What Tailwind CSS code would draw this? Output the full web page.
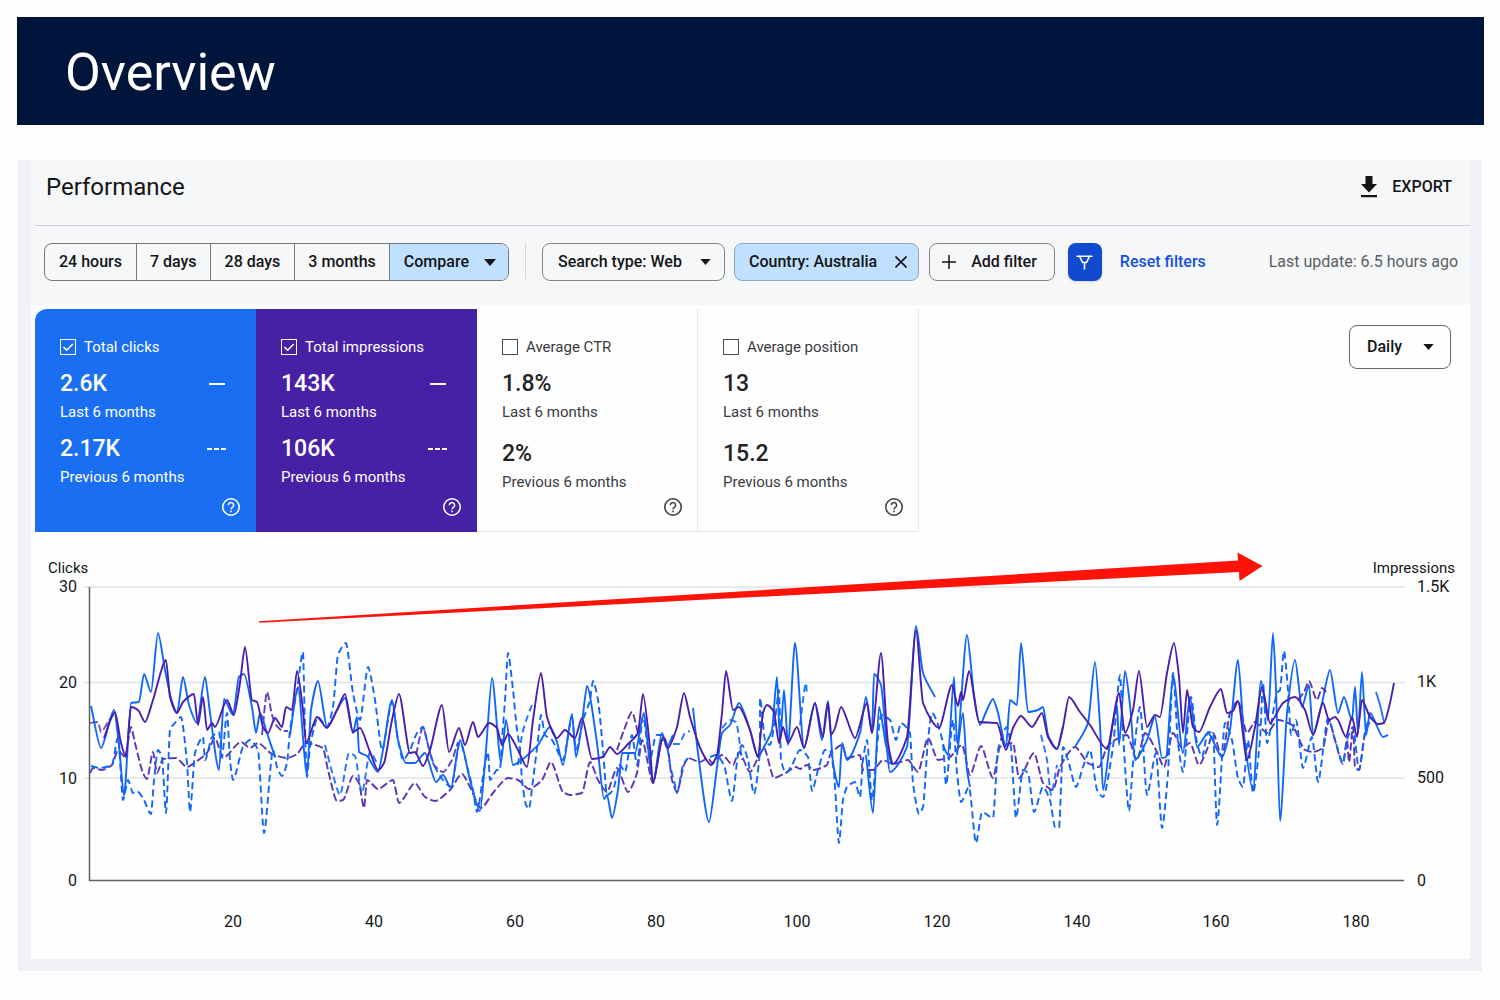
<!DOCTYPE html>
<html lang="en">
<head>
<meta charset="utf-8">
<meta name="viewport" content="width=device-width, initial-scale=1">
<title>Overview</title>
<script src="https://cdn.jsdelivr.net/npm/@tailwindcss/browser@4"></script>
</head>
<body class="bg-[#fdfdfd] font-[Roboto,sans-serif] text-base text-[#141517]">
<header class="mr-4 ml-[17px] mt-[17px] flex h-[108px] items-center bg-[#00153b] px-12 pt-1">
  <h1 class="text-[52px] leading-none text-white">Overview</h1>
</header>

<main class="mx-[18px] mt-[35px] mb-7 bg-[#f0f2f8] pr-3 pb-3 pl-[13px]">
  <div class="bg-[#f6f7f9]">
    <div class="ml-1 flex h-[66px] items-center justify-between border-b border-[#cdd2de] pr-[18px] pb-3 pl-[11px]">
      <h2 class="text-2xl leading-8">Performance</h2>
      <button class="flex items-center gap-[15px] font-medium">
        <svg class="h-[22px] w-4" viewBox="0 0 16 22" fill="currentColor" aria-hidden="true"><path d="M4.500 0h7v8H16l-8 8.500L0 8h4.500zM0 19h16v2.200H0z"/></svg>
        EXPORT
      </button>
    </div>

    <div class="flex h-[79px] items-start pt-[17px] pr-3 pl-[13px] whitespace-nowrap">
      <div class="flex h-[38px] overflow-hidden rounded-lg border border-[#77797d] font-medium" role="group" aria-label="Date range">
        <button class="border-r border-[#77797d] px-[14px]">24 hours</button>
        <button class="border-r border-[#77797d] px-[13px]">7 days</button>
        <button class="border-r border-[#77797d] px-[14px]">28 days</button>
        <button class="border-r border-[#77797d] px-[13px]">3 months</button>
        <button class="flex items-center gap-[15px] bg-[#bfe0fe] pr-3 pl-[14px]">Compare
          <svg class="h-[7px] w-3" viewBox="0 0 12 7" fill="currentColor" aria-hidden="true"><path d="M0 0h12L6 7z"/></svg>
        </button>
      </div>
      <div class="mx-4 h-9 w-px bg-[#d0d5df]"></div>
      <div class="relative h-[38px]">
        <select aria-label="Search type" class="h-full appearance-none rounded-lg border border-[#85878b] pr-[42px] pl-[15px] font-medium">
          <option>Search type: Web</option>
        </select>
        <svg class="pointer-events-none absolute top-4 right-[14px] h-[6px] w-[11px]" viewBox="0 0 12 7" fill="currentColor" aria-hidden="true"><path d="M0 0h12L6 7z"/></svg>
      </div>
      <div class="ml-[9px] flex h-[38px] items-center gap-[18px] rounded-lg border border-[#8fa8bf] bg-[#bfe0fe] pr-[11px] pl-[14px] font-medium">Country: Australia
        <button aria-label="Remove country filter"><svg class="size-3" viewBox="0 0 12 12" fill="none" stroke="currentColor" stroke-width="1.600" aria-hidden="true"><path d="M0.500 0.500l11 11M11.500 0.500l-11 11"/></svg></button>
      </div>
      <button class="ml-[10px] flex h-[38px] items-center gap-[15px] rounded-lg border border-[#85878b] pr-[17px] pl-3 font-medium">
        <svg class="size-[14px]" viewBox="0 0 14 14" fill="none" stroke="currentColor" stroke-width="1.500" aria-hidden="true"><path d="M7 0v14M0 7h14"/></svg>
        Add filter
      </button>
      <button class="ml-[13px] flex h-[38px] w-[34px] items-center justify-center rounded-lg bg-[#1149cf] text-white shadow-sm" aria-label="Filters">
        <svg class="h-[15px] w-[17px]" viewBox="0 0 17 15" fill="none" stroke="currentColor" stroke-width="1.600" stroke-linecap="round" stroke-linejoin="round" aria-hidden="true"><path d="M1 1.200h15M3.500 1.200l3 6.300h4l3-6.300M8.500 7.500V14"/></svg>
      </button>
      <a href="#" class="ml-[18px] leading-[38px] font-medium text-[#1450e0]">Reset filters</a>
      <p class="ml-auto leading-[38px] text-[#5c5e62]">Last update: 6.5 hours ago</p>
    </div>

    <section class="bg-[#fefefe] pt-1">
      <div class="flex items-start justify-between pr-[19px] pl-1">
        <div class="grid h-[223px] grid-cols-[repeat(4,221px)] text-[15px]">
          <article class="flex flex-col rounded-tl-xl bg-[#1a6ef2] pt-[26px] pr-4 pb-4 pl-[25px] text-white">
            <label class="flex items-center gap-2 leading-6">
              <span class="relative flex"><input type="checkbox" checked class="size-4 appearance-none border-[1.500px] border-white"><svg class="pointer-events-none absolute inset-0 size-4" viewBox="0 0 16 16" fill="none" stroke="currentColor" stroke-width="1.600" aria-hidden="true"><path d="M3.500 8l3.200 3.200L12.800 5"/></svg></span>
              Total clicks</label>
            <div class="mt-[9px] flex items-center justify-between pr-[15px]"><strong class="text-[23px] leading-8 font-medium">2.6K</strong><span class="w-4 border-t-2 border-white"></span></div>
            <p class="mt-0.5 leading-5">Last 6 months</p>
            <div class="mt-[11px] flex items-center justify-between pr-[14px]"><strong class="text-[23px] leading-8 font-medium">2.17K</strong><span class="flex gap-[2px]"><i class="h-0.5 w-[5px] bg-white"></i><i class="h-0.5 w-[5px] bg-white"></i><i class="h-0.5 w-[5px] bg-white"></i></span></div>
            <p class="mt-0.5 leading-5">Previous 6 months</p>
            <button class="mt-auto self-end" aria-label="About total clicks"><svg class="size-[18px]" viewBox="0 0 18 18" fill="none" stroke="currentColor" stroke-width="1.500" aria-hidden="true"><circle cx="9" cy="9" r="8.200"/><path d="M6.400 7.200a2.600 2.600 0 1 1 4 2.100C9.400 9.900 9 10.300 9 11.300M9 12.600v1.600"/></svg></button>
          </article>
          <article class="flex flex-col bg-[#4621a6] pt-[26px] pr-4 pb-4 pl-[25px] text-white">
            <label class="flex items-center gap-2 leading-6">
              <span class="relative flex"><input type="checkbox" checked class="size-4 appearance-none border-[1.500px] border-white"><svg class="pointer-events-none absolute inset-0 size-4" viewBox="0 0 16 16" fill="none" stroke="currentColor" stroke-width="1.600" aria-hidden="true"><path d="M3.500 8l3.200 3.200L12.800 5"/></svg></span>
              Total impressions</label>
            <div class="mt-[9px] flex items-center justify-between pr-[15px]"><strong class="text-[23px] leading-8 font-medium">143K</strong><span class="w-4 border-t-2 border-white"></span></div>
            <p class="mt-0.5 leading-5">Last 6 months</p>
            <div class="mt-[11px] flex items-center justify-between pr-[14px]"><strong class="text-[23px] leading-8 font-medium">106K</strong><span class="flex gap-[2px]"><i class="h-0.5 w-[5px] bg-white"></i><i class="h-0.5 w-[5px] bg-white"></i><i class="h-0.5 w-[5px] bg-white"></i></span></div>
            <p class="mt-0.5 leading-5">Previous 6 months</p>
            <button class="mt-auto self-end" aria-label="About total impressions"><svg class="size-[18px]" viewBox="0 0 18 18" fill="none" stroke="currentColor" stroke-width="1.500" aria-hidden="true"><circle cx="9" cy="9" r="8.200"/><path d="M6.400 7.200a2.600 2.600 0 1 1 4 2.100C9.400 9.900 9 10.300 9 11.300M9 12.600v1.600"/></svg></button>
          </article>
          <article class="flex flex-col border-r border-b border-[#e6e7ea] pt-[26px] pr-[15px] pb-[15px] pl-[25px] text-[#3a3b3e]">
            <label class="flex items-center gap-2 leading-6"><input type="checkbox" class="size-4 appearance-none border-[1.500px] border-[#4a4b4e]">Average CTR</label>
            <strong class="mt-[9px] text-[23px] leading-8 font-medium text-[#222325]">1.8%</strong>
            <p class="mt-0.5 leading-5">Last 6 months</p>
            <strong class="mt-4 text-[23px] leading-8 font-medium text-[#222325]">2%</strong>
            <p class="mt-0.5 leading-5">Previous 6 months</p>
            <button class="mt-auto self-end" aria-label="About average CTR"><svg class="size-[18px]" viewBox="0 0 18 18" fill="none" stroke="currentColor" stroke-width="1.500" aria-hidden="true"><circle cx="9" cy="9" r="8.200"/><path d="M6.400 7.200a2.600 2.600 0 1 1 4 2.100C9.400 9.900 9 10.300 9 11.300M9 12.600v1.600"/></svg></button>
          </article>
          <article class="flex flex-col border-r border-b border-[#e6e7ea] pt-[26px] pr-[15px] pb-[15px] pl-[25px] text-[#3a3b3e]">
            <label class="flex items-center gap-2 leading-6"><input type="checkbox" class="size-4 appearance-none border-[1.500px] border-[#4a4b4e]">Average position</label>
            <strong class="mt-[9px] text-[23px] leading-8 font-medium text-[#222325]">13</strong>
            <p class="mt-0.5 leading-5">Last 6 months</p>
            <strong class="mt-4 text-[23px] leading-8 font-medium text-[#222325]">15.2</strong>
            <p class="mt-0.5 leading-5">Previous 6 months</p>
            <button class="mt-auto self-end" aria-label="About average position"><svg class="size-[18px]" viewBox="0 0 18 18" fill="none" stroke="currentColor" stroke-width="1.500" aria-hidden="true"><circle cx="9" cy="9" r="8.200"/><path d="M6.400 7.200a2.600 2.600 0 1 1 4 2.100C9.400 9.900 9 10.300 9 11.300M9 12.600v1.600"/></svg></button>
          </article>
        </div>
        <div class="relative mt-4 h-11">
          <select aria-label="Granularity" class="h-full w-[102px] appearance-none rounded-lg border-[1.500px] border-[#66686c] bg-[#fefefe] pl-[17px] font-medium">
            <option>Daily</option><option>Weekly</option><option>Monthly</option>
          </select>
          <svg class="pointer-events-none absolute top-[19px] right-[17px] h-[6px] w-[11px]" viewBox="0 0 12 7" fill="currentColor" aria-hidden="true"><path d="M0 0h12L6 7z"/></svg>
        </div>
      </div>

      <svg class="block w-full" viewBox="31 532 1439 427" role="img" aria-label="Clicks and impressions per day">
        <g stroke="#e2e3e6" stroke-width="1.500"><path d="M84 587H1405M84 682.500H1405M84 778H1405"/></g>
        <g id="series" fill="none" stroke-width="1.900" stroke-linejoin="round" stroke-linecap="butt"></g>
        <path d="M89.500 587V880.500H1404" fill="none" stroke="#5f6063" stroke-width="1.500"/>
        <path d="M259 621.300L1238 560.500L1237.500 552.500L1262.500 566L1239.500 581L1239 572L259 622.800Z" fill="#ff1208"/>
        <g class="text-[15px]" fill="#141517"><text x="48" y="573">Clicks</text><text x="1455" y="573" text-anchor="end">Impressions</text></g>
        <g class="text-base" fill="#141517">
          <g text-anchor="end"><text x="77" y="592">30</text><text x="77" y="688">20</text><text x="77" y="784">10</text><text x="77" y="886">0</text></g>
          <text x="1417" y="592">1.5K</text><text x="1417" y="687">1K</text><text x="1417" y="783">500</text><text x="1417" y="886">0</text>
          <g text-anchor="middle"><text x="233" y="927">20</text><text x="374" y="927">40</text><text x="515" y="927">60</text><text x="656" y="927">80</text><text x="797" y="927">100</text><text x="937" y="927">120</text><text x="1077" y="927">140</text><text x="1216" y="927">160</text><text x="1356" y="927">180</text></g>
        </g>
      </svg>
    </section>
  </div>
</main>

<script>
const BLUE = '#0f66fa', PURPLE = '#4a1eac';
// Each series: colour, dash pattern, opacity, then "x,y" points in chart units.
const series = [
  [PURPLE, '8 3', .9, '90,773 93,768 102,770 112,765 118,750 125,757 131,727 135,743 143,773 147,779 153,752 157,773 163,759 176,758 187,767 197,761 207,753 215,738 223,758 241,742 250,748 258,743 272,754 287,758 297,754 306,743 312,744 323,748 328,770 337,801 343,800 353,776 359,783 364,808 367,780 378,789 393,780 399,803 415,783 425,797 435,801 450,790 462,774 470,787 481,808 493,793 508,778 518,780 529,789 542,780 551,762 563,792 570,795 582,793 590,762 598,780 607,792 617,768 628,792 637,773 642,740 653,783 662,740 668,750 672,780 677,792 684,765 688,758 700,762 708,758 712,763 722,755 733,765 739,752 750,772 757,760 764,748 774,778 787,772 796,767 800,769 807,765 813,770 827,765 830,755 842,745 847,758 860,755 863,770 873,770 883,760 893,764 908,760 918,772 928,738 938,760 950,757 962,745 970,775 981,746 993,778 1000,747 1013,743 1019,778 1034,753 1043,783 1053,790 1060,767 1075,747 1088,763 1099,767 1107,747 1115,740 1127,735 1137,760 1145,733 1157,752 1164,767 1173,733 1182,748 1190,743 1199,765 1208,747 1213,733 1222,757 1230,713 1238,701 1247,733 1255,722 1267,733 1278,720 1292,725 1305,750 1313,752 1323,748 1329,720 1335,740 1343,764 1347,740 1349,762 1353,727 1355,767 1359,770 1365,733 1372,717'],
  [PURPLE, '8 3', .75, '90,723 98,722 101,732 108,722 115,712'],
  [PURPLE, '8 3', .85, '262,735 267,692 272,715 276,725 283,731 288,731'],
  [PURPLE, '8 3', .85, '416,755 423,727 428,745 434,765 443,772 452,760 458,742'],
  [PURPLE, '8 3', .9, '617,750 624,730 632,712 638,733'],
  [BLUE, '7 4', 1, '91,766 100,768 112,765 118,737 123,800 128,780 133,793 137,791 143,798 151,814 154,780 158,750 162,757 166,813 170,730 175,723 181,717 187,763 190,812 195,753 203,737 205,760 212,737 219,732 222,757 227,713 230,760 233,780 243,747 250,740 258,750 264,833 273,750 277,767 282,776 287,763 290,730 297,690 303,652 305,730 307,777 310,747 318,717 327,727 333,707 338,655 346,643 353,693 360,720 368,667 375,700 382,750 392,702 398,740 403,760 410,750 417,733 423,727 428,745 434,765 443,780 451,787 460,742 468,770 473,790 477,812 484,770 488,752 490,780 497,770 500,770 502,740 505,700 508,653 513,690 517,730 520,750 522,780 526,805 529,809 533,780 538,740 541,715 545,735 552,740 563,760 572,718 576,750 583,720 590,700 593,681 598,700 603,750 607,795 613,790 620,765 625,772 632,735 637,765 643,716 650,760 656,735 663,735 667,745 670,765 675,785 677,793 683,765 688,758'],
  [BLUE, '7 4', 1, '710,757 716,755 724,765 732,801 738,755 742,745 748,760 754,794 760,750 760,698 765,740 770,745 775,720 779,690 781,760 786,773 792,765 800,750 808,757 812,791 818,770 825,750 830,750 834,773 839,843 843,800 847,787 855,782 860,797 863,760 867,740 872,800 877,747 881,715 890,720 896,740 901,723 910,733 913,783 919,814 923,807 928,740 932,713 943,743 946,785 953,720 957,773 961,802 969,787 976,843 982,812 993,818 998,750 1007,727 1011,747 1016,818 1023,770 1028,773 1034,812 1043,787 1050,800 1055,827 1059,828 1063,747 1068,760 1076,787 1083,767 1090,750 1097,790 1103,797 1113,747 1120,675 1123,733 1129,811 1133,763 1140,707 1147,795 1156,753 1162,828 1168,773 1173,673 1178,743 1183,772 1191,697 1197,743 1202,757 1208,732 1213,733 1217,825 1225,723 1232,740 1238,778 1243,787 1248,740 1253,793 1260,740 1263,683 1267,743 1277,693 1280,690 1284,651 1288,690 1291,735 1296,720 1303,768 1312,737 1318,782 1328,718 1335,740 1343,763 1347,740 1353,727 1359,770 1365,733 1370,713'],
  [BLUE, '7 4', .9, '325,745 333,775 340,795 349,753 355,756 362,793 370,752 378,765'],
  [BLUE, '7 4', .9, '518,765 522,735 527,718 532,705'],
  [BLUE, '7 4', .9, '673,744 679,744 685,733 690,731'],
  [BLUE, '7 4', .9, '722,728 730,720 736,722 742,760'],
  [BLUE, '7 4', .9, '800,725 806,683 807,695'],
  [BLUE, '7 4', .9, '1041,735 1047,760 1051,795 1057,765'],
  [BLUE, '', 1, '91,706 101,748 114,710 119,745 124,796 131,703 139,702 144,674 151,692 158,633 165,670 172,702 177,713 183,677 189,705 197,723 205,677 210,713 219,770 224,699 233,715 239,677 244,674 252,707 256,733 260,713 267,733 275,757'],
  [BLUE, '', 1, '290,735 298,687 307,775 311,710 318,681 327,727 337,710 345,698 353,733 357,717 359,752 367,756 378,772 383,750 392,700 398,740 406,763 415,763 425,753 436,782 443,775 451,788 460,740 470,780 480,811 486,750 492,678 501,762 506,720 513,765 522,760 533,750 538,745 550,727 557,742 563,765 572,714 576,757 582,723 587,686 597,743 604,799 607,795 612,818 618,790 622,753 635,753 644,713 648,747 653,783 662,733 667,747 673,735'],
  [BLUE, '', 1, '693,708 698,753 709,822 717,767 722,733 730,725 739,703 750,730 758,757 765,745 772,730 777,677 780,743 784,690 788,745 795,643 804,748 815,703 822,740 828,701 833,763 839,787 842,743 847,760 860,733 866,697 872,733 874,674 881,685 890,772 907,747 916,626 923,673 935,697'],
  [BLUE, '', 1, '866,755 873,813 879,707 886,745 892,765'],
  [BLUE, '', 1, '943,745 948,755 954,677 957,743 967,635 974,695 980,725 986,712 993,699 998,713 1006,747 1010,700 1017,705 1021,643 1028,712 1038,710 1043,707 1048,735 1057,749 1063,727'],
  [BLUE, '', 1, '957,755 963,713 967,770 970,787'],
  [BLUE, '', 1, '1075,747 1088,723 1095,662 1100,725 1103,790 1111,735 1117,705 1119,745 1125,671 1130,705 1135,760 1147,740 1155,717 1162,758 1166,757 1173,675 1183,753 1190,697 1197,747 1208,733 1222,757 1230,730 1238,660 1244,735 1253,790 1261,681 1268,720 1273,633 1276,690 1280,821 1287,713 1295,660 1302,707 1309,685 1313,735 1322,703 1330,670 1338,713 1344,697 1352,720 1355,687 1358,733 1362,672 1366,735 1370,713 1383,737 1388,735'],
  [BLUE, '', .9, '1376,692 1380,705 1384,722'],
  [PURPLE, '', 1, '104,738 115,712 121,743 126,757 131,707 138,710 145,722 153,700 166,660 170,697 177,713 183,702 194,694 198,725 203,697 207,730 212,723 215,727 227,700 234,715 240,683 245,647 252,700 257,702 263,727 268,733 275,718 282,727 286,707 292,710 297,671 303,710 306,743 317,717 327,728 337,710 345,694 353,732 360,728 370,752 378,770 384,763 392,720 399,694 410,753 415,752 423,766 430,750 442,705 449,752 459,728 465,745 473,722 478,737 489,723 497,728 502,745 508,734 518,750 527,767 533,720 541,673 547,717 557,738 565,730 575,738 582,718 592,759 603,757 610,747 617,754 628,744 638,733 643,694 650,748 653,783 663,737 668,748 677,727 684,693 690,717 702,752 711,765 717,755 722,713 726,671 733,710 739,707 750,730 758,757 763,713 767,705 774,712 779,743 783,727 788,743 797,727 804,748 815,703 823,737 828,703 831,735 835,728 841,707 855,738 867,703 872,733 881,653 888,743 893,764 907,737 916,630 923,703 939,728 952,685 958,706 961,692 963,700 969,671 979,722 997,723 1006,750 1013,728 1021,716 1032,727 1042,713 1048,737 1057,749 1063,727 1069,697 1080,712 1090,725 1107,749 1119,693 1125,733 1133,710 1139,671 1147,727 1155,715 1160,717 1167,673 1174,643 1179,677 1183,733 1187,690 1193,727 1199,732 1210,707 1221,689 1227,713 1233,711 1238,701 1247,760 1255,727 1262,687 1270,723 1283,703 1295,697 1305,710 1313,735 1323,703 1329,720 1335,717 1338,720 1346,737 1352,717 1357,737 1362,700 1370,717 1378,724 1384,723 1390,703 1394,683'],
  [PURPLE, '8 3', .9, '1298,700 1304,692 1309,681 1317,700 1322,688 1326,692'],
];

// Monotone cubic interpolation: flat at every peak and trough, no overshoot.
function curve(text) {
  const p = text.split(' ').map(s => s.split(',').map(Number));
  const slope = i => (p[i + 1][1] - p[i][1]) / ((p[i + 1][0] - p[i][0]) || 1);
  const t = p.map((_, i) => {
    if (i === 0) return slope(0);
    if (i === p.length - 1) return slope(i - 1);
    const a = slope(i - 1), b = slope(i);
    return a * b <= 0 ? 0 : 2 * a * b / (a + b);
  });
  let d = 'M' + p[0];
  for (let i = 0; i < p.length - 1; i++) {
    const h = (p[i + 1][0] - p[i][0]) / 4;
    d += `C${p[i][0] + h},${p[i][1] + t[i] * h} ${p[i + 1][0] - h},${p[i + 1][1] - t[i + 1] * h} ${p[i + 1]}`;
  }
  return d;
}

const group = document.getElementById('series');
for (const [colour, dash, opacity, points] of series) {
  const path = document.createElementNS('http://www.w3.org/2000/svg', 'path');
  path.setAttribute('d', curve(points));
  path.setAttribute('stroke', colour);
  path.setAttribute('opacity', opacity);
  if (dash) path.setAttribute('stroke-dasharray', dash);
  group.append(path);
}
</script>
</body>
</html>
